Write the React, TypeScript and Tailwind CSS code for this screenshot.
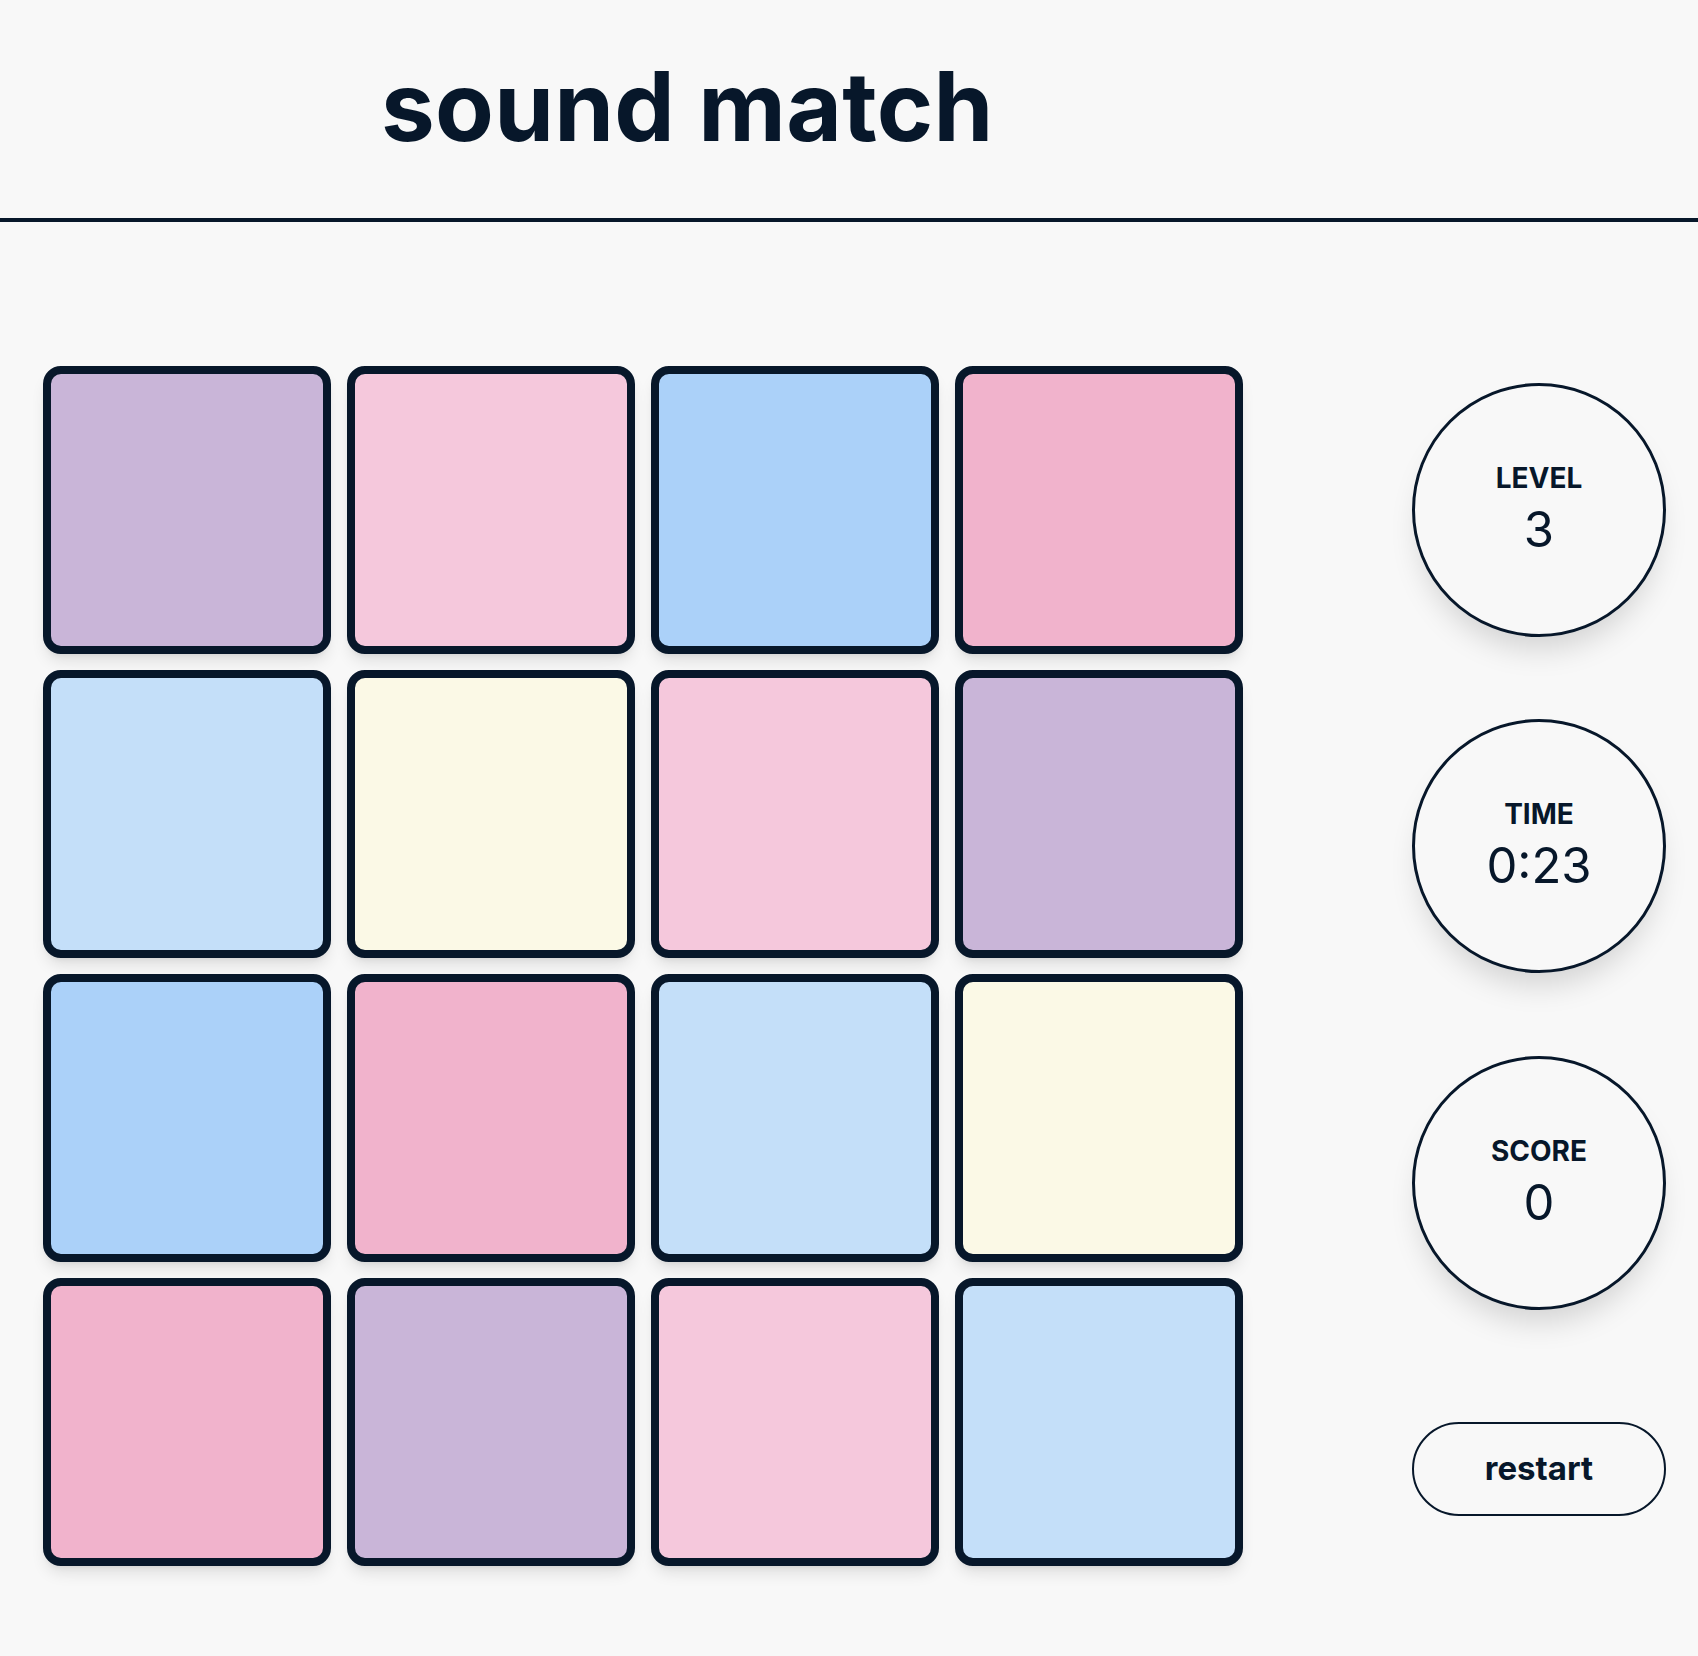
import React from "react";

const tiles = [
  "bg-[#c9b5d8]", "bg-[#f5c8dc]", "bg-[#abd1f9]", "bg-[#f1b3cc]",
  "bg-[#c4dff9]", "bg-[#fbf9e6]", "bg-[#f5c8dc]", "bg-[#c9b5d8]",
  "bg-[#abd1f9]", "bg-[#f1b3cc]", "bg-[#c4dff9]", "bg-[#fbf9e6]",
  "bg-[#f1b3cc]", "bg-[#c9b5d8]", "bg-[#f5c8dc]", "bg-[#c4dff9]",
];

function Stat({ label, value }: { label: string; value: string }) {
  return (
    <div className="w-[254px] h-[254px] rounded-full border-[3px] border-[#07172a] bg-[#f8f8f8] flex flex-col items-center justify-center shadow-[0_20px_30px_-8px_rgba(0,0,0,0.15)]">
      <div className="text-[28px] leading-[40px] font-bold text-[#07172a]">{label}</div>
      <div className="text-[49px] leading-[64px] font-normal text-[#07172a]">{value}</div>
    </div>
  );
}

export default function App() {
  return (
    <div className="min-h-screen bg-[#f8f8f8] text-[#07172a]" style={{ fontFamily: "Inter, 'Noto Sans', sans-serif" }}>
      <header className="pt-[58px] pb-[64px] pl-[381px] border-b-[4px] border-[#07172a]">
        <h1 className="text-[96px] leading-[96px] font-bold tracking-[0.3px]">sound match</h1>
      </header>
      <main className="flex pt-[144px] pl-[43px] pr-[32px]">
        <div className="grid grid-cols-4 gap-4 w-[1200px]">
          {tiles.map((c, i) => (
            <div key={i} className={`h-[288px] rounded-[18px] border-[8px] border-[#07172a] shadow-lg ${c}`} />
          ))}
        </div>
        <div className="ml-auto flex flex-col pt-[17px]">
          <Stat label="LEVEL" value="3" />
          <div className="h-[82px]" />
          <Stat label="TIME" value="0:23" />
          <div className="h-[83px]" />
          <Stat label="SCORE" value="0" />
          <button className="mt-[112px] w-[254px] h-[94px] rounded-full border-2 border-[#07172a] bg-[#f8f8f8] text-[33px] font-bold text-[#07172a]">
            restart
          </button>
        </div>
      </main>
    </div>
  );
}
